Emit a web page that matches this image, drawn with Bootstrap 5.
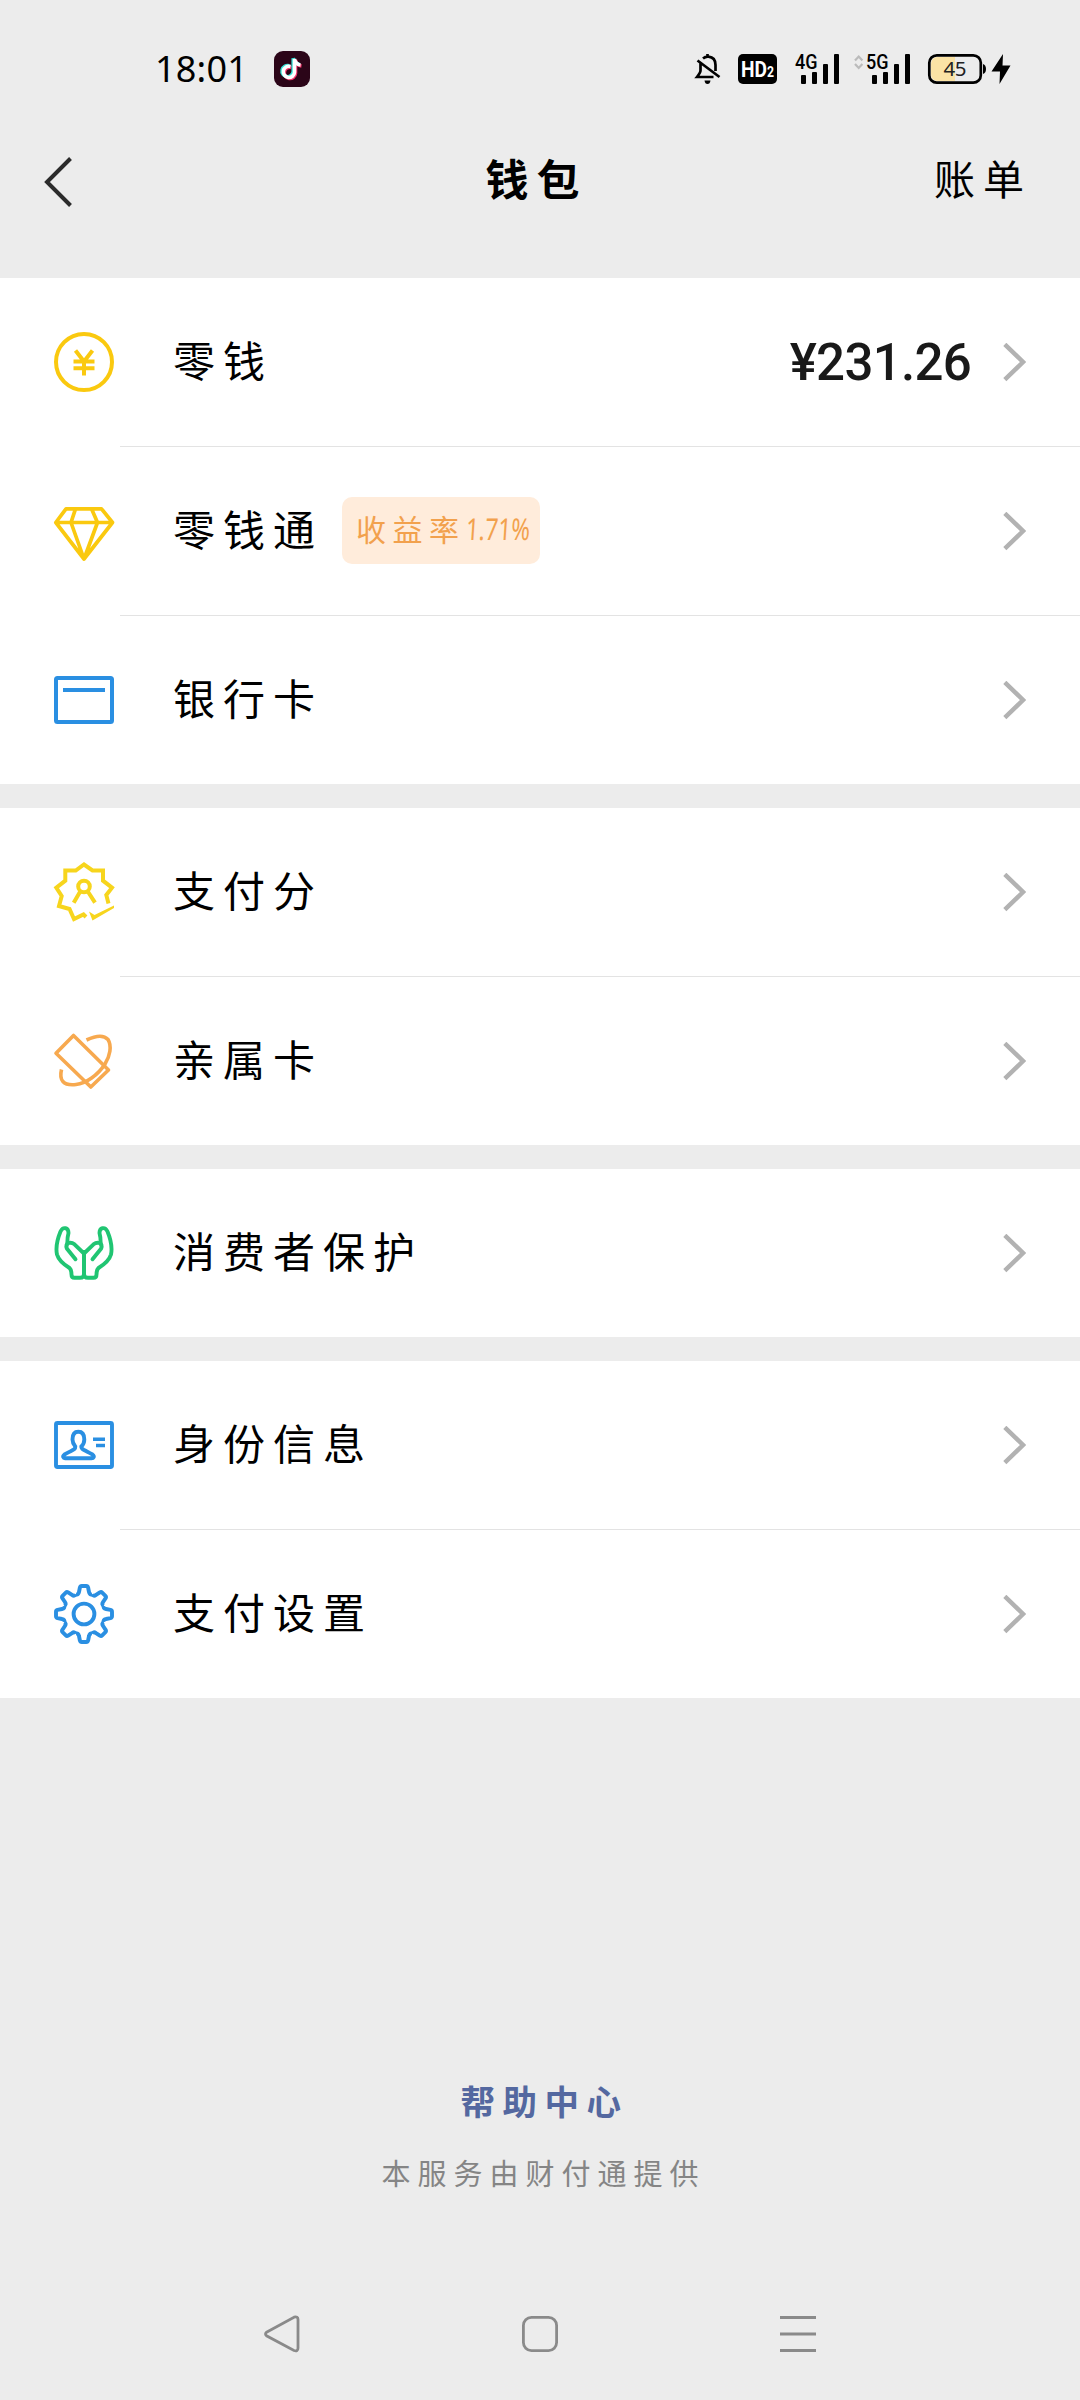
<!DOCTYPE html>
<html lang="zh-CN">
<head>
<meta charset="utf-8">
<meta name="viewport" content="width=device-width, initial-scale=1">
<title>钱包</title>
<link rel="stylesheet" href="https://cdn.jsdelivr.net/npm/bootstrap@5.3.0/dist/css/bootstrap.min.css">
<script src="https://cdn.jsdelivr.net/npm/bootstrap@5.3.0/dist/js/bootstrap.bundle.min.js"></script>
<style>
  body { background: #ececec; color: #000; font-family: "Noto Sans CJK SC", sans-serif; }
  .phone { width: 1080px; height: 2400px; overflow: hidden; }
  svg { display: block; flex: none; overflow: visible; }
  .status-bar { height: 138px; padding-left: 155px; padding-right: 70px; }
  .clock { font: 400 36px/40px "Noto Sans", sans-serif; width: 119px; letter-spacing: .2px; }
  .title-bar { height: 84px; margin-bottom: 56px; padding: 0 48px 0 44px; font-size: 43px; }
  .title-bar > * { flex: 1 1 0; }
  .spaced { letter-spacing: 8px; line-height: 60px; padding-bottom: 7px; white-space: nowrap; }
  .title-text { font-weight: 700; text-align: center; padding-right: 3px; }
  .bill-link { font-size: 41px; }
  .group { margin-bottom: 24px; background: #fff; }
  .group:last-child { margin-bottom: 0; }
  .entry { height: 168px; padding: 0 54px; color: #000; border: 0; background: #fff; }
  .entry + .entry { height: 169px; padding-top: 1px; background: linear-gradient(#e3e3e3, #e3e3e3) 120px 0 / 960px 1px no-repeat #fff; }
  .entry-name { font-size: 42px; margin-left: 59px; }
  .rate { height: 67px; width: 198px; margin-left: 19px; margin-bottom: 2px; padding-left: 14px; padding-bottom: 4px; border-radius: 10px; background: #ffecdb; color: #f2a14d; font-size: 30px; letter-spacing: 6.5px; white-space: nowrap; }
  .rate-value { display: inline-block; font-family: "Noto Sans", sans-serif; letter-spacing: 0; transform: scaleX(.76) skewX(-5deg); transform-origin: 0 50%; }
  .amount { font: 500 51px/60px Roboto, sans-serif; letter-spacing: -.7px; color: #191919; margin-right: 32px; padding-top: 2px; }
  .help-link { margin-top: 377px; font-size: 34.5px; line-height: 50px; letter-spacing: 7.5px; font-weight: 700; color: #5468a0; text-decoration: none; padding-left: 9px; }
  .provider { margin-top: 27px; font-size: 29px; line-height: 40px; letter-spacing: 7px; color: #858585; padding-left: 7px; }
  .system-nav { margin-top: 122px; padding: 0 264px; height: 40px; }
  .yellow { color: #fac90f; } .blue { color: #2a8fe2; } .orange { color: #f7a94f; } .green { color: #20c572; }
</style>
</head>
<body>
<svg width="0" height="0" class="position-absolute" aria-hidden="true">
  <symbol id="chev" viewBox="0 0 23 39"><path d="M1.800 1.300 20 19 1.800 36.700" fill="none" stroke="#b2b2b2" stroke-width="4.400"/></symbol>
</svg>
<div class="phone d-flex flex-column">
  <div class="status-bar d-flex align-items-center justify-content-between">
    <div class="d-flex align-items-center">
      <div class="clock">18:01</div>
      <svg width="36" height="36" viewBox="0 0 36 36">
        <rect width="36" height="36" rx="9" fill="#2b0518"/>
        <g fill="none" stroke-width="3.600">
          <path d="M16.500 15.500a5.600 5.600 0 1 0 4 5.800V8c.7 3.600 3 5.600 6 6" stroke="#f5326a" transform="translate(1 1)"/>
          <path d="M16.500 15.500a5.600 5.600 0 1 0 4 5.800V8c.7 3.600 3 5.600 6 6" stroke="#35e0d5" transform="translate(-1.300 -.8)"/>
          <path d="M16.500 15.500a5.600 5.600 0 1 0 4 5.800V8c.7 3.600 3 5.600 6 6" stroke="#fff"/>
        </g>
      </svg>
    </div>
    <svg width="316" height="30" viewBox="694 54 316 30">
      <g fill="none" stroke="#000" stroke-width="2.700">
        <path d="M703 58.500c2-1.700 4-2 5.500-1.800 4.500.5 7 3.600 7 8.300v6M700.500 63v7.500q0 2-3.500 6.500h16.500M697.500 60.500 719.500 77M707.500 57v-3"/>
      </g>
      <path d="M704.500 80.500h6q-.5 3.500-3 3.500t-3-3.500z"/>
      <rect x="738" y="54" width="39" height="30" rx="5"/>
      <text x="741" y="76.800" font-family="Roboto,sans-serif" font-weight="700" font-size="22" textLength="33" lengthAdjust="spacingAndGlyphs" fill="#fff">HD<tspan font-size="14">2</tspan></text>
      <g font-family="Roboto,sans-serif" font-weight="500" font-size="20">
        <text x="795" y="69" textLength="22.500" lengthAdjust="spacingAndGlyphs">4G</text>
        <text x="866" y="69" textLength="22.500" lengthAdjust="spacingAndGlyphs">5G</text>
      </g>
      <g>
        <rect x="801" y="75" width="5" height="9" rx="1"/><rect x="812" y="72" width="5" height="12" rx="1"/><rect x="823" y="64" width="5" height="20" rx="1"/><rect x="834" y="54" width="5" height="30" rx="1"/>
        <rect x="872" y="75" width="5" height="9" rx="1"/><rect x="883" y="72" width="5" height="12" rx="1"/><rect x="894" y="64" width="5" height="20" rx="1"/><rect x="905" y="54" width="5" height="30" rx="1"/>
      </g>
      <path d="M855 60.500 858.700 56.500 862.400 60.500M855 64 858.700 68 862.400 64" fill="none" stroke="#bbb" stroke-width="2.200"/>
      <path d="M937 57h18v24h-18q-6-1-6-7V64q0-6 6-7z" fill="#fbe3a5"/>
      <rect x="929.300" y="55.300" width="51.500" height="27.400" rx="7.500" fill="none" stroke="#000" stroke-width="2.700"/>
      <path d="M983 64q3 1 3 5t-3 5z"/>
      <text x="943.500" y="76.300" font-family="Noto Sans,sans-serif" font-weight="400" font-size="20.500" textLength="23" fill="#222">45</text>
      <path d="M1003 54 991.500 71.500h8.500L999.500 84 1010.500 65.500h-8z"/>
    </svg>
  </div>

  <header class="title-bar d-flex align-items-center">
    <div><svg class="mt-1" width="28" height="50" viewBox="0 0 28 50"><path d="M26.500 1.500 3 25 26.500 48.500" fill="none" stroke="#2b2b2b" stroke-width="4"/></svg></div>
    <div class="spaced title-text">钱包</div>
    <div class="spaced bill-link text-end">账单</div>
  </header>

  <main>
    <section class="group">
      <div class="entry d-flex align-items-center">
        <svg class="yellow" width="60" height="60" fill="none" stroke="currentColor" stroke-width="4"><circle cx="30" cy="30" r="28"/><path d="M21.500 18.500 30 29.500 38.500 18.500M30 29.500V43.500M19.500 29.500h21M19.500 36.300h21"/></svg>
        <div class="entry-name spaced">零钱</div>
        <div class="amount ms-auto">¥231.26</div>
        <svg width="23" height="39"><use href="#chev"/></svg>
      </div>
      <div class="entry d-flex align-items-center">
        <svg class="yellow" width="60" height="60" fill="none" stroke="currentColor" stroke-width="3.700" stroke-linejoin="round"><path d="M12 7.800H47.500L58.500 21.500 30 58 1.800 21.500zM1.800 21.500H58.500M21.500 7.800 17 21.500 30 58 43.500 21.500 37.500 7.800"/></svg>
        <div class="entry-name spaced">零钱通</div>
        <div class="rate d-flex align-items-center">收益率<span class="rate-value">1.71%</span></div>
        <svg class="ms-auto" width="23" height="39"><use href="#chev"/></svg>
      </div>
      <div class="entry d-flex align-items-center">
        <svg class="blue" width="60" height="60" fill="none" stroke="currentColor" stroke-width="4"><rect x="2" y="8" width="56" height="44" rx="1.500"/><path d="M9 20H51"/></svg>
        <div class="entry-name spaced">银行卡</div>
        <svg class="ms-auto" width="23" height="39"><use href="#chev"/></svg>
      </div>
    </section>

    <section class="group">
      <div class="entry d-flex align-items-center">
        <svg width="60" height="60" fill="none" stroke="#f7d51d" stroke-width="4"><path d="M54.500 41.500 52.300 33 58 25.700 49 18.700V8.500H38.500L30 2.500 21.700 8.500H11.300V18.700L2.300 25.700 7.700 34 5 44 15.500 47 20 57 29.500 52.500 32 55"/><circle cx="30" cy="24.500" r="5.800"/><path d="M26.500 29 19.700 40.700M33.500 29 41 40.700"/><path d="M35 49.500 40.500 53 60 43.500V46L38.500 58.500z" fill="#f7d51d" stroke="none"/></svg>
        <div class="entry-name spaced">支付分</div>
        <svg class="ms-auto" width="23" height="39"><use href="#chev"/></svg>
      </div>
      <div class="entry d-flex align-items-center">
        <svg class="orange" width="60" height="60" fill="none" stroke="currentColor" stroke-width="3.600" stroke-linejoin="round"><path d="M19.500 4.500 54.500 39 36.800 56 2 22.300z"/><path d="M32.500 9C42 4.500 50 4 54 8.500 58 15 56 25 51 33 44 44 32 52.500 22 53.500 9 55 5 49 7.500 38.500"/></svg>
        <div class="entry-name spaced">亲属卡</div>
        <svg class="ms-auto" width="23" height="39"><use href="#chev"/></svg>
      </div>
    </section>

    <section class="group">
      <div class="entry d-flex align-items-center">
        <svg class="green" width="60" height="60" fill="none" stroke="currentColor" stroke-width="3.900" stroke-linecap="round" stroke-linejoin="round"><g id="palm"><path d="M30 29V51Q30 54.800 26 54.800H20.500Q17.500 54.800 17.500 51.500 17.500 47 15.500 45 5 38.500 3 31.500 1 22 6.500 8.500 8.500 4.500 11.500 5.200 14.500 6 14.500 10 13.300 14 13.300 20.500"/><path d="M21.500 36.300 12.800 25.500Q11.500 21.500 14.500 20 17.500 19 20.500 21.300L30 30.500"/></g><use href="#palm" transform="matrix(-1 0 0 1 60 0)"/></svg>
        <div class="entry-name spaced">消费者保护</div>
        <svg class="ms-auto" width="23" height="39"><use href="#chev"/></svg>
      </div>
    </section>

    <section class="group">
      <div class="entry d-flex align-items-center">
        <svg class="blue" width="60" height="60" fill="none" stroke="currentColor" stroke-width="3.900"><rect x="2" y="8" width="56" height="44" rx="1.500"/><path d="M24.300 16.800C20 16.800 18.500 20 18.500 24.500 18.500 28 20 30 21.300 31.500 21.500 34 20.500 34 10.500 39.500 8 41.500 9.500 43.300 11 43.300H37.500C39.500 43.300 41 41.500 38.500 39.500 28.500 34 27 34 27.300 31.500 29 30 30.300 28 30.300 24.500 30.300 20 28.500 16.800 24.300 16.800z"/><path d="M39 24.300H51M42 30.500H51" stroke-width="3.500"/></svg>
        <div class="entry-name spaced">身份信息</div>
        <svg class="ms-auto" width="23" height="39"><use href="#chev"/></svg>
      </div>
      <div class="entry d-flex align-items-center">
        <svg class="blue" width="60" height="60" viewBox="-30 -30 60 60" fill="none" stroke="currentColor" stroke-width="3.900" stroke-linejoin="round"><circle r="10.400"/><g id="teeth"><path id="cog" d="M-8.200-19.800Q-5.500-18.800-5-22L-4.100-26.500Q-3.700-28-2.300-28H2.300Q3.700-28 4.100-26.500L5-22Q5.500-18.800 8.200-19.800"/><use href="#cog" transform="rotate(45)"/><use href="#cog" transform="rotate(90)"/><use href="#cog" transform="rotate(135)"/></g><use href="#teeth" transform="rotate(180)"/></svg>
        <div class="entry-name spaced">支付设置</div>
        <svg class="ms-auto" width="23" height="39"><use href="#chev"/></svg>
      </div>
    </section>
  </main>

  <a class="help-link text-center">帮助中心</a>
  <div class="provider text-center">本服务由财付通提供</div>

  <nav class="system-nav d-flex align-items-center justify-content-between">
    <svg width="36" height="36" fill="none" stroke="#8a8a8a" stroke-width="2.800"><path d="M2.500 16.200 30 1.200Q34 .2 34 3.500V32Q34 35.800 30 34.500L2.500 19.800Q.5 18 2.500 16.200z"/></svg>
    <svg width="36" height="36" fill="none" stroke="#8a8a8a" stroke-width="2.800"><rect x="1.400" y="1.400" width="33.200" height="33.200" rx="8"/></svg>
    <svg width="36" height="36" fill="none" stroke="#8a8a8a" stroke-width="3"><path d="M0 1.500H36M0 18H36M0 34.500H36"/></svg>
  </nav>
</div>
</body>
</html>
